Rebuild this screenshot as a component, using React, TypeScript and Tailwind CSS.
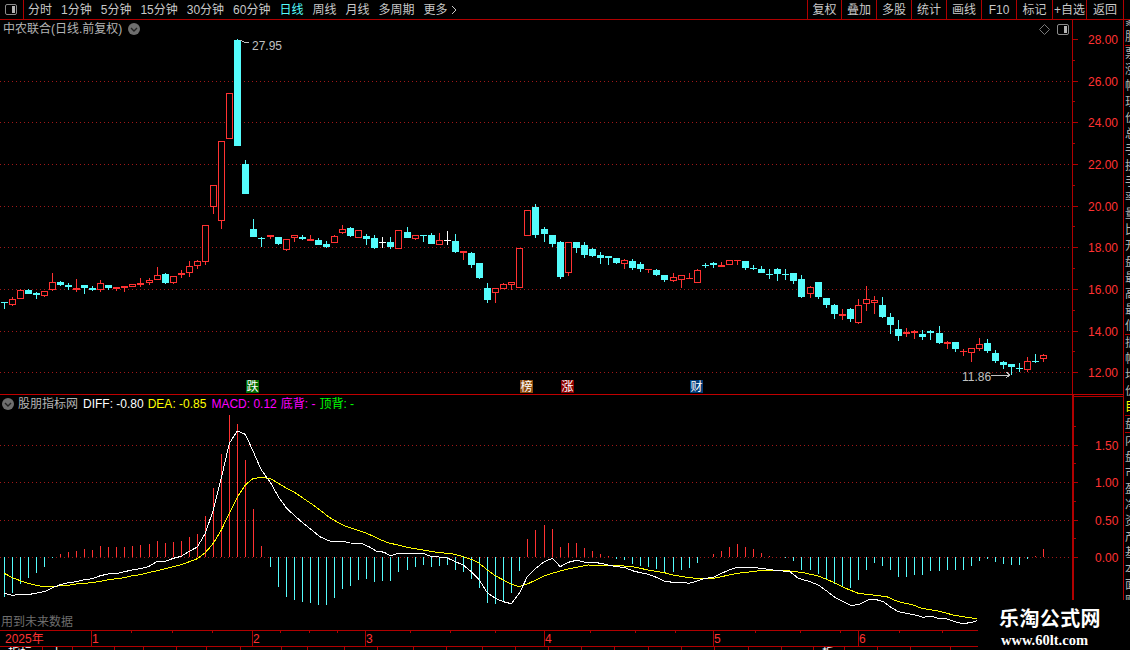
const RED = "#ff3232";
const CYAN = "#54fcfc";
const LINE = "#b00000";
const GRID = "#a01818";

// bars are not evenly spaced: the chart drifts one extra pixel at these indexes
const JUMPS = [18, 33, 50, 67, 83, 100, 116];
const barX = (i: number) => 4 + i * 8 + JUMPS.filter((j) => i >= j).length;

type Candle = [number, number, number, number, string];

// values read off 3x crops: body top, body bottom, wick top, wick bottom, kind
const seg1: Candle[] = [
  [817, 817, 817, 838, "c"], [808, 824, 802, 827, "r"], [781, 808, 778, 808, "r"], [781, 791, 777, 791, "c"],
  [789, 794, 785, 806, "c"], [784, 797, 784, 800, "r"], [757, 781, 729, 783, "r"], [757, 764, 754, 767, "c"],
  [766, 771, 759, 779, "c"], [774, 779, 747, 785, "R"], [766, 773, 766, 791, "c"], [774, 779, 768, 782, "c"],
  [760, 781, 750, 785, "r"], [766, 773, 766, 779, "c"], [772, 777, 772, 782, "R"], [769, 773, 769, 785, "R"],
  [763, 770, 763, 770, "r"], [760, 764, 744, 770, "R"], [751, 760, 744, 766, "r"], [736, 751, 712, 751, "r"],
  [733, 758, 729, 761, "c"], [737, 760, 737, 763, "r"], [730, 736, 721, 743, "r"], [709, 730, 694, 740, "r"],
  [694, 709, 690, 716, "r"], [586, 697, 586, 704, "r"], [466, 532, 466, 551, "r"], [334, 574, 334, 596, "r"],
  [190, 328, 190, 328, "r"], [30, 347, 27, 347, "c"], [402, 491, 390, 491, "c"], [598, 620, 568, 620, "c"],
  [623, 623, 620, 650, "c"], [616, 621, 616, 626, "R"], [622, 643, 622, 646, "c"],
];
const seg2: Candle[] = [
  [148, 179, 148, 182, "r"], [136, 143, 136, 155, "r"], [141, 146, 135, 150, "c"], [147, 152, 136, 153, "R"],
  [151, 164, 145, 165, "c"], [163, 171, 153, 174, "c"], [139, 158, 136, 158, "r"], [118, 128, 106, 131, "r"],
  [114, 137, 111, 140, "c"], [121, 143, 121, 143, "r"], [139, 147, 132, 165, "c"], [145, 173, 136, 176, "c"],
  [157, 157, 141, 174, "w"], [157, 171, 141, 176, "c"], [121, 176, 121, 176, "r"], [126, 143, 111, 143, "c"],
  [136, 146, 136, 149, "r"], [136, 136, 136, 156, "c"], [136, 161, 129, 161, "c"], [151, 164, 129, 164, "r"],
  [151, 151, 123, 165, "w"], [154, 185, 132, 188, "c"], [183, 188, 183, 209, "R"], [190, 225, 186, 233, "c"],
  [220, 263, 220, 266, "c"], [294, 329, 279, 338, "c"], [295, 310, 295, 338, "r"], [283, 296, 279, 296, "r"],
  [277, 284, 277, 299, "r"], [175, 293, 175, 293, "r"], [61, 137, 61, 137, "r"], [52, 134, 42, 143, "c"],
  [118, 131, 111, 155, "c"], [136, 161, 136, 170, "c"], [157, 260, 154, 266, "c"], [157, 248, 157, 257, "r"],
  [157, 173, 157, 188, "c"],
];
const seg3: Candle[] = [
  [45, 75, 36, 84, "c"], [57, 78, 54, 81, "c"], [75, 84, 66, 102, "c"], [78, 84, 78, 105, "c"],
  [84, 99, 84, 102, "c"], [91, 102, 87, 117, "r"], [94, 114, 87, 120, "c"], [102, 118, 96, 126, "c"],
  [118, 118, 118, 129, "R"], [121, 135, 117, 138, "c"], [135, 150, 135, 156, "c"], [142, 153, 129, 156, "r"],
  [136, 149, 136, 174, "r"], [144, 144, 129, 148, "R"], [121, 159, 118, 159, "r"], [106, 106, 99, 114, "c"],
  [99, 105, 96, 114, "c"], [105, 111, 96, 111, "R"], [91, 104, 91, 104, "r"], [91, 91, 91, 105, "R"],
  [93, 114, 93, 120, "c"], [114, 114, 105, 120, "c"], [117, 129, 108, 129, "c"], [132, 132, 117, 147, "c"],
  [117, 132, 114, 153, "c"], [132, 132, 117, 150, "c"], [129, 153, 129, 162, "c"], [147, 201, 135, 204, "c"],
  [172, 191, 168, 204, "r"], [156, 201, 156, 207, "c"],
];
const seg4: Candle[] = [
  [84, 105, 84, 114, "c"], [105, 132, 102, 147, "c"], [132, 137, 117, 150, "R"], [117, 147, 114, 156, "c"],
  [106, 159, 87, 162, "r"], [88, 101, 48, 123, "r"], [91, 98, 78, 132, "r"], [105, 141, 81, 144, "c"],
  [141, 164, 129, 192, "c"], [177, 198, 150, 213, "c"], [187, 193, 174, 201, "r"], [184, 190, 180, 207, "R"],
  [192, 201, 180, 210, "c"], [183, 189, 180, 210, "c"], [189, 219, 168, 222, "c"], [216, 221, 213, 237, "R"],
  [216, 237, 216, 246, "c"], [243, 243, 237, 258, "R"], [235, 248, 235, 276, "r"], [223, 236, 204, 243, "r"],
  [219, 243, 207, 249, "c"], [250, 273, 240, 279, "c"], [277, 285, 273, 297, "c"], [283, 291, 283, 315, "c"],
  [295, 295, 279, 306, "c"], [274, 299, 262, 306, "r"], [274, 274, 252, 279, "c"], [255, 266, 252, 276, "r"],
];

const toPage = (rows: Candle[], y0: number): Candle[] =>
  rows.map(([a, b, c, d, k]) => [
    Math.round(y0 + a / 3), Math.round(y0 + b / 3), Math.round(y0 + c / 3), Math.round(y0 + d / 3), k,
  ]);

const candles: Candle[] = [
  ...toPage(seg1, 30), ...toPage(seg2, 190), ...toPage(seg3, 230), ...toPage(seg4, 270),
];

const ZERO = 557;
const bars1 = [560, 548, 521, 503, 488, 470, 445, 432, 426, 423, 417, 420, 408, 411, 411, 411, 408, 405, 402, 393, 399, 396, 393, 381, 372, 318, 234, 132, 15, 42, 150, 297, 408, 470, 530, 560, 569, 575, 578, 584, 584, 563, 536, 527, 509, 506, 515];
const bars2 = [212, 212, 185, 179, 170, 164, 170, 167, 164, 179, 185, 206, 233, 278, 281, 272, 248, 182, 87, 60, 45, 57, 111, 99, 99, 114, 123, 132, 139, 147, 150, 161, 167, 171, 176, 188, 185, 179, 174, 159, 142, 132, 123, 111, 102, 111, 117];
const bars3 = [129, 138, 141, 144, 153, 180, 180, 192, 210, 222, 228, 234, 210, 180, 159, 168, 180, 201, 201, 195, 195, 183, 183, 180, 180, 180, 168, 153, 147, 156, 162, 165, 165, 148, 138, 118];
const macd = [
  ...bars1.map((z) => 410 + z / 3),
  ...bars2.map((z) => 510 + z / 3),
  ...bars3.map((z) => 510 + z / 3),
].map(Math.round);

type Pts = number[][];
const toLine = (a: Pts, ax: number, ay: number) => a.map(([x, y]) => `${(ax + x / 3).toFixed(1)},${(ay + y / 3).toFixed(1)}`).join(" ");

const diff =
  toLine([[13, 550], [37, 556], [61, 553], [90, 553], [115, 548], [133, 545], [157, 533], [181, 524], [205, 518], [229, 515], [253, 509], [277, 506], [301, 497], [325, 492], [349, 491], [373, 485], [397, 480], [421, 476], [445, 470], [472, 454], [496, 454], [520, 445], [544, 439], [568, 424], [592, 411], [616, 370], [640, 300], [664, 205], [688, 100], [712, 63], [736, 73], [760, 125], [784, 180], [810, 215], [835, 260], [860, 295], [885, 318], [910, 340], [935, 360], [960, 380], [985, 392], [1010, 396], [1030, 394], [1050, 399], [1085, 400], [1110, 412], [1130, 424]], 0, 410) + " " +
  toLine([[0, 124], [15, 128], [31, 138], [55, 130], [80, 132], [106, 130], [130, 130], [154, 140], [178, 141], [202, 144], [226, 155], [250, 165], [274, 185], [298, 210], [322, 248], [346, 265], [370, 275], [394, 281], [418, 250], [442, 200], [466, 176], [493, 155], [517, 145], [541, 170], [565, 157], [589, 151], [613, 156], [637, 156], [661, 160], [685, 165], [709, 170], [733, 172], [757, 182], [781, 188], [805, 193], [829, 202], [853, 213], [877, 217], [904, 217], [928, 220], [952, 213], [976, 205], [1000, 202], [1024, 190], [1048, 180], [1072, 172], [1096, 172], [1120, 172]], 380, 510) + " " +
  toLine([[0, 175], [40, 180], [90, 185], [115, 205], [150, 215], [175, 225], [200, 243], [225, 262], [250, 275], [275, 287], [300, 282], [325, 270], [345, 268], [370, 275], [390, 290], [415, 305], [440, 310], [465, 315], [490, 322], [510, 318], [535, 325], [560, 327], [585, 335], [610, 341], [635, 337], [650, 332]], 760, 510);

const dea =
  toLine([[13, 490], [37, 503], [61, 512], [85, 520], [109, 526], [133, 530], [157, 530], [181, 527], [205, 526], [229, 522], [253, 520], [277, 518], [301, 514], [325, 509], [349, 506], [373, 503], [397, 497], [421, 494], [445, 488], [472, 482], [496, 476], [520, 470], [544, 464], [568, 455], [592, 446], [616, 428], [640, 400], [664, 360], [688, 310], [712, 262], [736, 225], [760, 205], [784, 203], [810, 205], [835, 220], [860, 235], [885, 248], [910, 265], [935, 282], [960, 300], [985, 320], [1010, 335], [1040, 350], [1070, 360], [1100, 370], [1130, 383]], 0, 410) + " " +
  toLine([[0, 89], [30, 100], [55, 105], [80, 112], [130, 120], [170, 127], [215, 131], [250, 140], [274, 148], [298, 160], [322, 180], [346, 197], [370, 210], [394, 222], [418, 230], [442, 222], [466, 211], [493, 198], [517, 190], [541, 183], [565, 177], [589, 172], [625, 165], [660, 166], [700, 167], [733, 168], [757, 170], [805, 180], [853, 188], [880, 195], [928, 203], [952, 205], [1000, 205], [1024, 200], [1072, 190]], 380, 510) + " " +
  toLine([[0, 182], [90, 183], [130, 188], [175, 198], [210, 212], [250, 232], [295, 250], [345, 256], [380, 260], [415, 275], [460, 285], [485, 295], [530, 302], [580, 315], [620, 322], [650, 326]], 760, 510);

const PRICE_GRID = [81, 122, 164, 206, 247, 289, 331, 372];
const PRICE_LABELS: [string, number][] = [["28.00", 39], ["26.00", 81], ["24.00", 122], ["22.00", 164], ["20.00", 206], ["18.00", 247], ["16.00", 289], ["14.00", 331], ["12.00", 372]];
const MACD_LABELS: [string, number][] = [["1.50", 445], ["1.00", 482], ["0.50", 520], ["0.00", 557]];

const LEFT_TABS = ["分时", "1分钟", "5分钟", "15分钟", "30分钟", "60分钟", "日线", "周线", "月线", "多周期"];
const RIGHT_TABS: [string, string][] = [
  ["复权", "w-[34px]"], ["叠加", "w-[35px]"], ["多股", "w-[35px]"], ["统计", "w-[35px]"], ["画线", "w-[35px]"],
  ["F10", "w-[35px]"], ["标记", "w-[36px]"], ["+自选", "w-[34px]"], ["返回", "w-[37px]"],
];

const MONTHS: [string, number][] = [["1", 91], ["2", 252], ["3", 365], ["4", 544], ["5", 713], ["6", 858]];
const DATE_TICKS = [131, 172, 212, 280, 309, 337, 410, 450, 495, 590, 635, 675, 755, 800, 840, 899, 942];

const SIDE_CHARS = "蒙股票涨幅现价总手换手率量比开盘最高最低振幅均价目盘内盘市盈净资产基本面财务流通".split("");
const BOTTOM_CELLS: [number, string][] = [[43, "指标"], [30, "上"], [42, ""], [29, ""], [33, ""], [30, ""], [34, ""], [41, ""], [26, ""], [37, ""], [33, ""], [36, ""], [33, ""], [36, ""], [33, ""], [33, ""], [33, ""], [33, ""], [34, ""], [33, ""], [33, ""], [34, ""], [33, ""], [32, ""], [31, "板块"], [33, ""], [33, ""], [40, ""]];

function PanelIcon({ className }: { className: string }) {
  return (
    <svg className={className} width="12" height="11" viewBox="0 0 12 11">
      <rect x="0.5" y="0.5" width="11" height="10" rx="1.5" fill="none" stroke="#8c8c8c" />
      <rect x="7" y="2" width="3" height="7" fill="#b4b4b4" />
    </svg>
  );
}

function CircleChevron() {
  return (
    <svg width="12" height="12" viewBox="0 0 12 12" className="shrink-0">
      <circle cx="6" cy="6" r="6" fill="#6e6e6e" />
      <path d="M3 5l3 3 3-3" fill="none" stroke="#222" strokeWidth="1.4" />
    </svg>
  );
}

function CandleShape({ c, i }: { c: Candle; i: number }) {
  const [top, bottom, wickTop, wickBottom, kind] = c;
  const x = barX(i);
  const color = kind === "c" ? CYAN : kind === "w" ? "#ffffff" : RED;
  return (
    <g>
      <rect x={x} y={wickTop} width="1" height={Math.max(wickBottom - wickTop, 1)} fill={color} />
      {kind === "r" ? (
        <rect x={x - 2.5} y={top + 0.5} width="6" height={Math.max(bottom - top - 1, 1)} fill="#000" stroke={color} />
      ) : (
        <rect x={x - 3} y={top} width="7" height={Math.max(bottom - top, 1)} fill={color} />
      )}
    </g>
  );
}

function Tag({ text, bg, left }: { text: string; bg: string; left: string }) {
  return (
    <span className={`absolute top-[360px] flex h-[13px] w-[13px] items-center justify-center text-[12px] leading-none text-white ${bg} ${left}`}>
      {text}
    </span>
  );
}

function PriceChart() {
  return (
    <div className="relative h-[374px] w-[1072px] shrink-0">
      <svg width="1072" height="374" viewBox="0 20 1072 374" shapeRendering="crispEdges" className="block">
        {PRICE_GRID.map((y) => (
          <line key={y} x1="0" x2="1072" y1={y + 0.5} y2={y + 0.5} stroke={GRID} strokeDasharray="1 3" />
        ))}
        {candles.map((c, i) => (
          <CandleShape key={i} c={c} i={i} />
        ))}
        <polyline points="240,40 244,42 249,43" fill="none" stroke="#c0c0c0" />
        <line x1="991" y1="375.5" x2="1010" y2="375.5" stroke="#c0c0c0" />
        <path d="M1006 372l4 3-4 3" fill="none" stroke="#c0c0c0" />
      </svg>

      <div className="absolute left-[3px] top-0 flex h-[18px] items-center gap-[6px] text-[12px] text-[#b4b4b4]">
        <span>中农联合(日线.前复权)</span>
        <CircleChevron />
      </div>
      <span className="absolute left-[252px] top-[19px] text-[12px] leading-[14px] text-[#c0c0c0]">27.95</span>
      <span className="absolute left-[962px] top-[350px] text-[12px] leading-[14px] text-[#c0c0c0]">11.86</span>

      <svg className="absolute left-[1039px] top-[4px]" width="11" height="11" viewBox="0 0 11 11">
        <path d="M5.5 0.5l5 5-5 5-5-5z" fill="none" stroke="#7a7a7a" />
      </svg>
      <PanelIcon className="absolute left-[1057px] top-[4px]" />

      <Tag text="跌" bg="bg-[#006a00]" left="left-[246px]" />
      <Tag text="榜" bg="bg-[#8c4a0c]" left="left-[520px]" />
      <Tag text="涨" bg="bg-[#8c0000]" left="left-[561px]" />
      <Tag text="财" bg="bg-[#003c78]" left="left-[690px]" />
    </div>
  );
}

function PriceAxis() {
  return (
    <svg width="50" height="374" viewBox="1073 20 50 374" className="block">
      {PRICE_LABELS.map(([label, y]) => (
        <g key={label}>
          <rect x="1073" y={y} width="5" height="1" fill={LINE} shapeRendering="crispEdges" />
          {y > 39 && <rect x="1073" y={y - 21} width="2" height="1" fill={LINE} shapeRendering="crispEdges" />}
          <text x="1088" y={y + 5} fontSize="12" fill={RED}>{label}</text>
        </g>
      ))}
    </svg>
  );
}

function MacdChart() {
  return (
    <div className="relative h-[235px] w-[1072px] shrink-0">
      <svg width="1072" height="235" viewBox="0 395 1072 235" shapeRendering="crispEdges" className="block">
        {MACD_LABELS.map(([label, y]) => (
          <line key={label} x1="0" x2="1072" y1={y + 0.5} y2={y + 0.5} stroke={GRID} strokeDasharray="1 3" />
        ))}
        {macd.map((y, i) => (
          <rect
            key={i}
            x={barX(i)}
            y={Math.min(y, ZERO)}
            width="1"
            height={Math.abs(y - ZERO)}
            fill={y < ZERO ? RED : CYAN}
          />
        ))}
        <polyline points={dea} fill="none" stroke="#ffff00" />
        <polyline points={diff} fill="none" stroke="#ffffff" />
      </svg>

      <div className="absolute left-[2px] top-0 flex h-[18px] items-center text-[12px] whitespace-nowrap">
        <CircleChevron />
        <span className="ml-[4px] text-[#b4b4b4]">股朋指标网</span>
        <span className="ml-[5px] text-white">DIFF: -0.80</span>
        <span className="ml-[4px] text-[#ffff00]">DEA: -0.85</span>
        <span className="ml-[5px] text-[#ff00ff]">MACD: 0.12</span>
        <span className="ml-[4px] text-[#ff00ff]">底背: -</span>
        <span className="ml-[4px] text-[#00ff00]">顶背: -</span>
      </div>
      <span className="absolute bottom-0 left-[1px] text-[12px] leading-[16px] text-[#6e6e6e]">用到未来数据</span>
    </div>
  );
}

function MacdAxis() {
  return (
    <svg width="49" height="233" viewBox="1074 397 49 233" className="block">
      {MACD_LABELS.map(([label, y]) => (
        <g key={label}>
          <rect x="1074" y={y} width="4" height="1" fill={LINE} shapeRendering="crispEdges" />
          <rect x="1074" y={y - 19} width="2" height="1" fill={LINE} shapeRendering="crispEdges" />
          <text x="1095" y={y + 5} fontSize="12" fill={RED}>{label}</text>
        </g>
      ))}
    </svg>
  );
}

function DateBar() {
  return (
    <svg width="1123" height="15" viewBox="0 631 1123 15" className="block" shapeRendering="crispEdges">
      <text x="5" y="643" fontSize="12" fill={RED} shapeRendering="auto">2025年</text>
      {DATE_TICKS.map((x) => (
        <rect key={x} x={x} y="631" width="1" height="2" fill={LINE} />
      ))}
      {MONTHS.map(([m, x]) => (
        <g key={m}>
          <rect x={x} y="631" width="1" height="15" fill={LINE} />
          <text x={x + 1} y="643" fontSize="12" fill={RED} shapeRendering="auto">{m}</text>
        </g>
      ))}
    </svg>
  );
}

export default function App() {
  return (
    <div className="relative flex h-[650px] w-[1130px] flex-col overflow-hidden bg-black font-['Liberation_Sans','Noto_Sans_CJK_SC',sans-serif] text-[12px]">
      {/* top toolbar */}
      <header className="flex h-5 shrink-0 items-stretch border-b border-[#b00000] text-[#c8c8c8]">
        <div className="flex w-6 items-center justify-center border-r border-[#b00000]">
          <PanelIcon className="mr-[1px]" />
        </div>
        <nav className="flex flex-1 items-center gap-[9px] pl-1 whitespace-nowrap">
          {LEFT_TABS.map((tab) => (
            <span key={tab} className={tab === "日线" ? "text-[#54fcfc]" : ""}>{tab}</span>
          ))}
          <span className="flex items-center gap-[3px]">
            更多
            <svg width="6" height="10" viewBox="0 0 6 10"><path d="M1 1l4 4-4 4" fill="none" stroke="#c8c8c8" /></svg>
          </span>
        </nav>
        {RIGHT_TABS.map(([tab, w]) => (
          <span key={tab} className={`flex items-center justify-center border-l border-[#b00000] ${w} whitespace-nowrap`}>{tab}</span>
        ))}
        <span className="w-[7px] border-l border-[#b00000]" />
      </header>

      <div className="flex min-h-0 flex-1">
        <div className="flex w-[1123px] shrink-0 flex-col">
          <div className="flex border-b border-[#c00000]">
            <PriceChart />
            <div className="border-l border-[#b00000]">
              <PriceAxis />
            </div>
          </div>
          <div className="flex">
            <MacdChart />
            <div className="border-l-2 border-[#b00000]">
              <div className="h-[2px] border-b border-[#b00000]" />
              <MacdAxis />
            </div>
          </div>
          <div className="border-y border-[#b00000]">
            <DateBar />
          </div>
          <div className="flex h-[3px] overflow-hidden text-[12px] leading-[12px] text-white">
            {BOTTOM_CELLS.map(([w, text], i) => (
              <span key={i} className="shrink-0 border-r border-[#b00000] pl-2" style={{ width: w }}>{text}</span>
            ))}
          </div>
        </div>

        {/* right quote list, cut off by the window edge */}
        <aside className="flex w-[7px] flex-col overflow-hidden border-l border-[#b00000] pl-[1px] text-[12px] leading-[16px] text-[#b4b4b4]">
          <div className="-mt-[7px] flex flex-col">
            {SIDE_CHARS.map((ch, i) => (
              <span
                key={i}
                className={`shrink-0 ${i === 1 || i === 19 || i === 24 || i === 25 ? "border-b border-[#b00000]" : ""} ${i === 24 ? "text-[#ffff00]" : ""}`}
              >
                {ch}
              </span>
            ))}
          </div>
        </aside>
      </div>

      {/* site watermark */}
      <div className="absolute bottom-0 left-[978px] flex h-[50px] w-[152px] flex-col items-start bg-black pt-[6px] pl-[21px]">
        <span className="text-[20px] leading-[26px] font-bold tracking-[0.4px] text-white">乐淘公式网</span>
        <span className="ml-[2px] font-['Liberation_Serif',serif] text-[14.5px] leading-[16px] font-bold text-white">www.60lt.com</span>
      </div>
    </div>
  );
}
